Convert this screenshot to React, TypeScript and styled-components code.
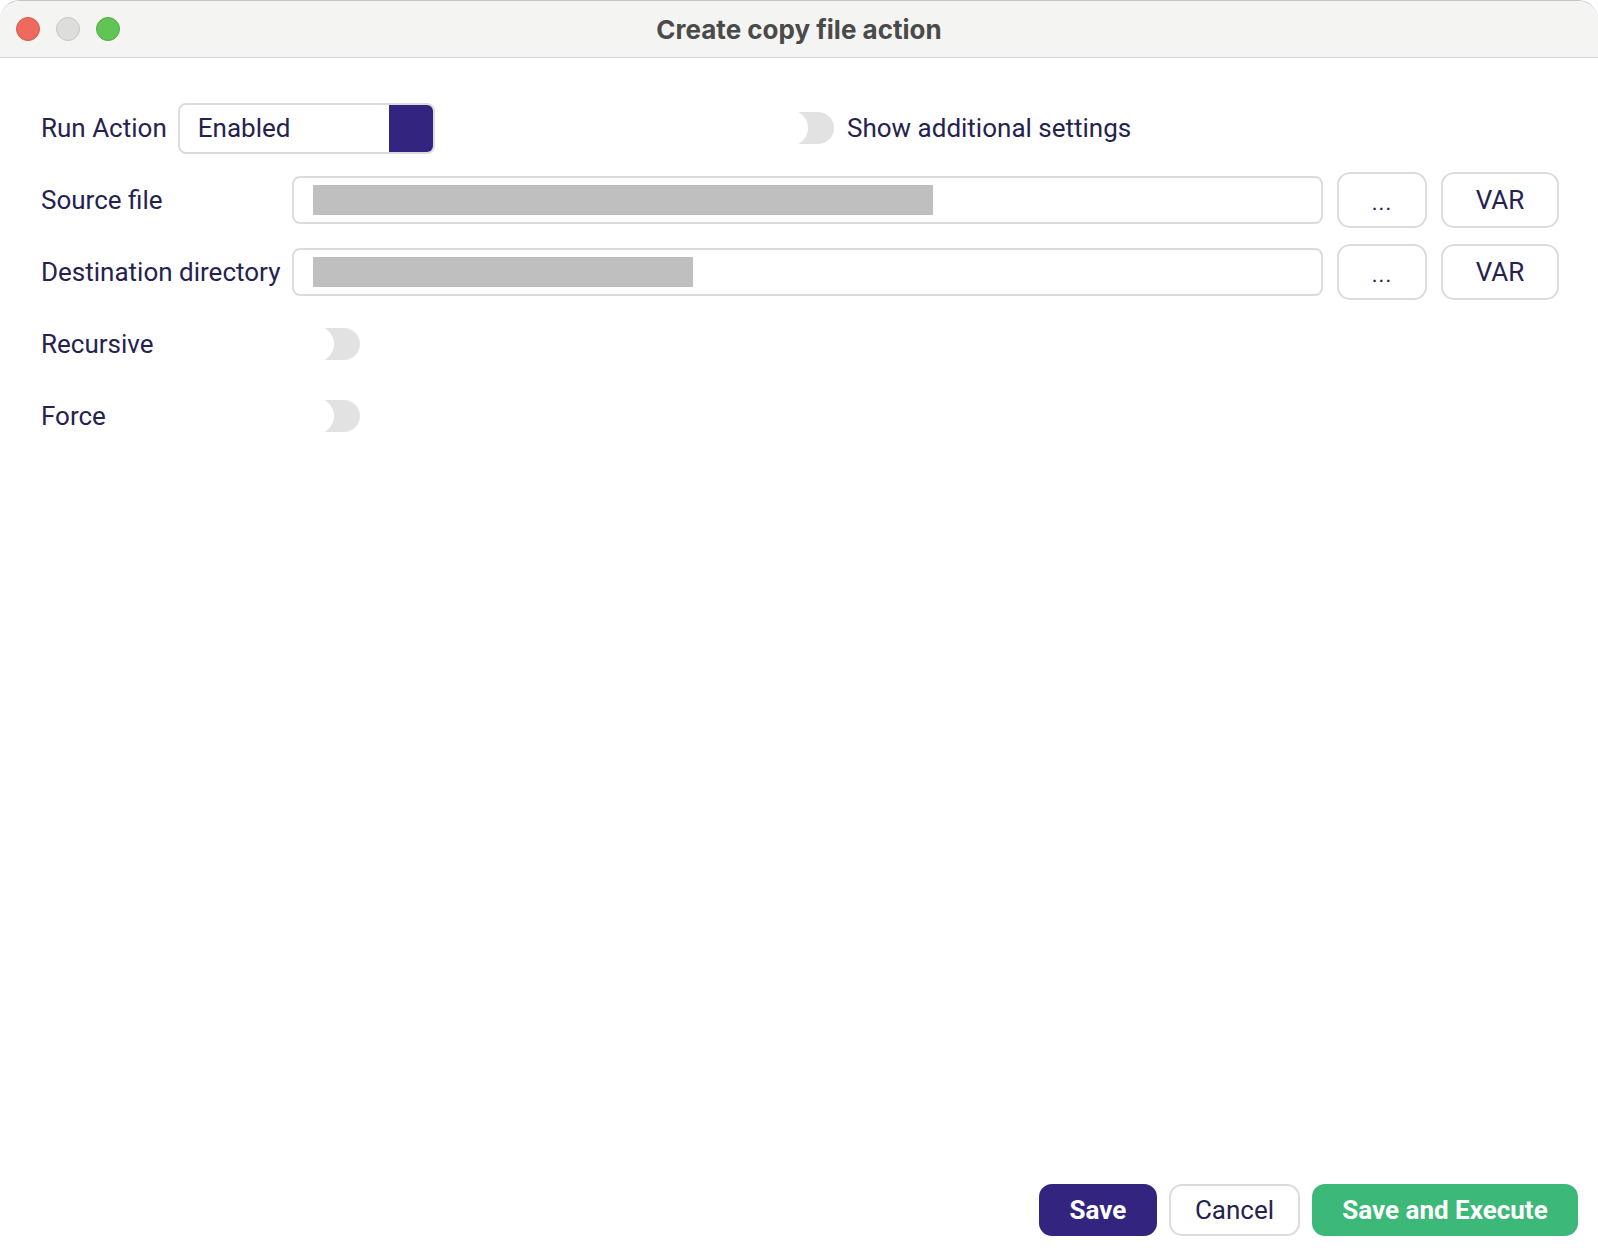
import styled, { createGlobalStyle } from "styled-components";

const GlobalStyle = createGlobalStyle`
  html, body {
    margin: 0;
    padding: 0;
    background: #ffffff;
  }
  * {
    box-sizing: border-box;
  }
`;

const NAVY = "#25224f";
const PURPLE = "#33247f";
const GREEN = "#3cb878";
const BORDER = "#dcdcdc";

const Window = styled.div`
  display: flex;
  flex-direction: column;
  width: 1598px;
  height: 1254px;
  background: #ffffff;
  border-radius: 20px;
  border-top: 1px solid #c4c4c4;
  overflow: hidden;
  font-family: Roboto, "Liberation Sans", sans-serif;
  color: ${NAVY};
`;

const TitleBar = styled.div`
  position: relative;
  display: flex;
  align-items: center;
  justify-content: center;
  height: 57px;
  flex-shrink: 0;
  background: #f4f4f2;
  border-bottom: 1px solid #d6d6d6;
`;

const Lights = styled.div`
  position: absolute;
  left: 16px;
  top: 16px;
  display: flex;
  gap: 16px;
`;

const Light = styled.span<{ $fill: string; $edge: string }>`
  width: 24px;
  height: 24px;
  border-radius: 50%;
  background: ${(p) => p.$fill};
  border: 1px solid ${(p) => p.$edge};
`;

const Title = styled.h1`
  margin: 0;
  font-family: Inter, "Liberation Sans", sans-serif;
  font-size: 26px;
  font-weight: 700;
  color: #4a4a4a;
`;

const Body = styled.div`
  flex: 1;
  display: flex;
  flex-direction: column;
  gap: 16px;
  padding: 42px 39px 0 41px;
`;

const TopRow = styled.div`
  display: grid;
  grid-template-columns: 725px 1fr;
  align-items: center;
  height: 56px;
`;

const Inline = styled.div`
  display: flex;
  align-items: center;
  gap: 11px;
`;

const FieldRow = styled.div`
  display: grid;
  grid-template-columns: 237px 1fr 90px 118px;
  column-gap: 14px;
  align-items: center;
  height: 56px;
`;

const Label = styled.span`
  font-size: 26px;
  color: ${NAVY};
  white-space: nowrap;
`;

const Select = styled.div`
  display: flex;
  align-items: stretch;
  width: 257px;
  height: 51px;
  border: 2px solid ${BORDER};
  border-radius: 8px;
  overflow: hidden;
`;

const SelectValue = styled.span`
  flex: 1;
  display: flex;
  align-items: center;
  padding-left: 18px;
  font-size: 26px;
`;

const SelectHandle = styled.span`
  width: 44px;
  background: ${PURPLE};
`;

const Input = styled.div`
  display: flex;
  align-items: center;
  height: 48px;
  padding: 0 19px;
  border: 2px solid ${BORDER};
  border-radius: 8px;
`;

const Redacted = styled.span<{ $w: number }>`
  display: block;
  width: ${(p) => p.$w}px;
  height: 30px;
  background: #bfbfbf;
`;

const SideButton = styled.button`
  height: 56px;
  border: 2px solid ${BORDER};
  border-radius: 13px;
  background: #ffffff;
  font-family: Roboto, "Liberation Sans", sans-serif;
  font-size: 26px;
  color: ${NAVY};
  padding: 0;
`;

const Dots = styled.span`
  font-size: 22px;
  letter-spacing: 1px;
  position: relative;
  top: 1px;
`;

const SwitchWrap = styled.div`
  display: flex;
  align-items: center;
  gap: 13px;
`;

const Track = styled.span`
  position: relative;
  display: block;
  width: 60px;
  height: 32px;
  margin-left: 8px;
  border-radius: 16px;
  background: #e2e2e2;
`;

const Knob = styled.span`
  position: absolute;
  left: -2px;
  top: -2px;
  width: 36px;
  height: 36px;
  border-radius: 50%;
  background: #ffffff;
`;

const Footer = styled.div`
  display: flex;
  justify-content: flex-end;
  gap: 12px;
  padding: 0 20px 18px 0;
`;

type Kind = "primary" | "plain" | "success";

const FooterButton = styled.button<{ $kind: Kind; $w: number }>`
  width: ${(p) => p.$w}px;
  height: 52px;
  padding: 0;
  border-radius: 13px;
  font-family: Roboto, "Liberation Sans", sans-serif;
  font-size: 26px;
  font-weight: ${(p) => (p.$kind === "plain" ? 400 : 700)};
  color: ${(p) => (p.$kind === "plain" ? NAVY : "#ffffff")};
  background: ${(p) =>
    p.$kind === "primary" ? PURPLE : p.$kind === "success" ? GREEN : "#ffffff"};
  border: 2px solid
    ${(p) =>
      p.$kind === "primary" ? PURPLE : p.$kind === "success" ? GREEN : BORDER};
`;

const Switch = ({ label }: { label?: string }) => (
  <SwitchWrap>
    <Track>
      <Knob />
    </Track>
    {label && <Label>{label}</Label>}
  </SwitchWrap>
);

const PathField = ({ label, width }: { label: string; width: number }) => (
  <FieldRow>
    <Label>{label}</Label>
    <Input>
      <Redacted $w={width} />
    </Input>
    <SideButton>
      <Dots>...</Dots>
    </SideButton>
    <SideButton>VAR</SideButton>
  </FieldRow>
);

const ToggleField = ({ label }: { label: string }) => (
  <FieldRow>
    <Label>{label}</Label>
    <Switch />
  </FieldRow>
);

const App = () => {
  return (
    <>
      <GlobalStyle />
      <Window>
        <TitleBar>
          <Lights>
            <Light $fill="#ee6a5f" $edge="#d9584c" />
            <Light $fill="#dddddb" $edge="#c6c6c4" />
            <Light $fill="#61c454" $edge="#51a944" />
          </Lights>
          <Title>Create copy file action</Title>
        </TitleBar>
        <Body>
          <TopRow>
            <Inline>
              <Label>Run Action</Label>
              <Select>
                <SelectValue>Enabled</SelectValue>
                <SelectHandle />
              </Select>
            </Inline>
            <Switch label="Show additional settings" />
          </TopRow>
          <PathField label="Source file" width={620} />
          <PathField label="Destination directory" width={380} />
          <ToggleField label="Recursive" />
          <ToggleField label="Force" />
        </Body>
        <Footer>
          <FooterButton $kind="primary" $w={118}>
            Save
          </FooterButton>
          <FooterButton $kind="plain" $w={131}>
            Cancel
          </FooterButton>
          <FooterButton $kind="success" $w={266}>
            Save and Execute
          </FooterButton>
        </Footer>
      </Window>
    </>
  );
};

export default App;
